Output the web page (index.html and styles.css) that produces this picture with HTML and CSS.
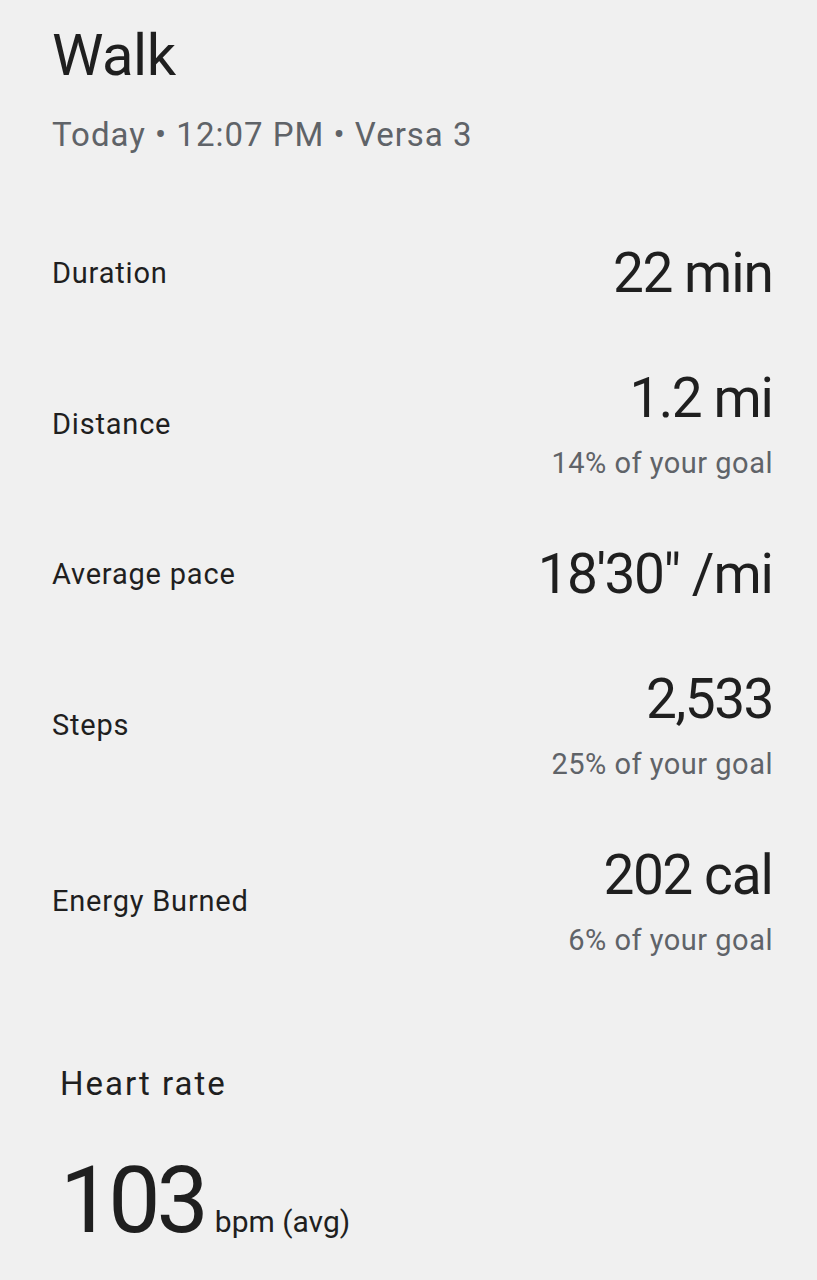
FILE: index.html
```html
<!DOCTYPE html>
<html lang="en">
<head>
  <meta charset="UTF-8" />
  <meta name="viewport" content="width=device-width, initial-scale=1" />
  <title>Walk</title>
  <link rel="stylesheet" href="styles.css">
</head>
<body>
  <main class="screen">
    <header class="workout-head">
      <h1>Walk</h1>
      <p class="meta">Today &bull; 12:07 PM &bull; Versa 3</p>
    </header>

    <section class="stats">
      <div class="stat">
        <span class="label">Duration</span>
        <div class="value-col">
          <div class="value">22 <span class="unit">min</span></div>
        </div>
      </div>
      <div class="stat">
        <span class="label">Distance</span>
        <div class="value-col">
          <div class="value">1.2 <span class="unit">mi</span></div>
          <div class="goal">14% of your goal</div>
        </div>
      </div>
      <div class="stat">
        <span class="label">Average pace</span>
        <div class="value-col">
          <div class="value">18'30" <span class="unit">/mi</span></div>
        </div>
      </div>
      <div class="stat">
        <span class="label">Steps</span>
        <div class="value-col">
          <div class="value">2,533</div>
          <div class="goal">25% of your goal</div>
        </div>
      </div>
      <div class="stat">
        <span class="label">Energy Burned</span>
        <div class="value-col">
          <div class="value">202 <span class="unit">cal</span></div>
          <div class="goal">6% of your goal</div>
        </div>
      </div>
    </section>

    <section class="heart">
      <h2>Heart rate</h2>
      <div class="heart-value">
        <span class="bpm">103</span>
        <span class="bpm-unit">bpm (avg)</span>
      </div>
    </section>
  </main>
</body>
</html>
```

FILE: styles.css
```css
*, *::before, *::after {
  box-sizing: border-box;
}

body {
  margin: 0;
  background: #f0f0f0;
  color: #1f1f1f;
  font-family: Roboto, "Noto Sans", sans-serif;
}

.screen {
  padding: 20px 44px 0 52px;
}

/* Title */
.workout-head h1 {
  margin: 0;
  font-size: 58px;
  line-height: 70px;
  font-weight: 400;
  letter-spacing: -0.5px;
}

.meta {
  margin: 25px 0 0;
  font-size: 33px;
  line-height: 40px;
  letter-spacing: 1px;
  color: #5f6368;
}

/* Stats list */
.stats {
  margin-top: 88px;
  display: flex;
  flex-direction: column;
  gap: 65px;
}

.stat {
  display: flex;
  justify-content: space-between;
  align-items: center;
}

.label {
  font-size: 29px;
  line-height: 34px;
  letter-spacing: 0.8px;
}

.value-col {
  text-align: right;
}

.value {
  font-size: 55px;
  line-height: 60px;
  letter-spacing: -1.5px;
}

.unit {
  letter-spacing: -1px;
}

.goal {
  padding-top: 19px;
  font-size: 29px;
  line-height: 32px;
  letter-spacing: 0.5px;
  color: #5f6368;
}

/* Heart rate */
.heart {
  margin-top: 108px;
  padding-left: 8px;
}

.heart h2 {
  margin: 0;
  font-size: 33px;
  line-height: 40px;
  font-weight: 400;
  letter-spacing: 2px;
}

.heart-value {
  margin-top: 47px;
  display: flex;
  align-items: baseline;
  gap: 10px;
}

.bpm {
  font-size: 93px;
  line-height: 100px;
  letter-spacing: -4px;
}

.bpm-unit {
  font-size: 30px;
}
```
